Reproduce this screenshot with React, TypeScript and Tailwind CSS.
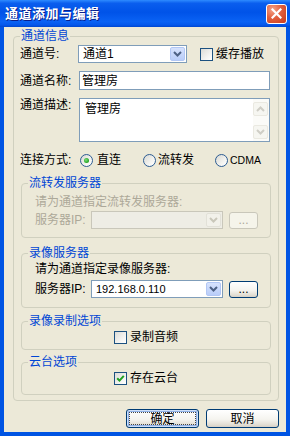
import React from "react";

function Chevron({ color, up = false }: { color: string; up?: boolean }) {
  return (
    <svg width="9" height="6" viewBox="0 0 9 6">
      <path
        d={up ? "M1 5 L4.5 1.5 L8 5" : "M1 1 L4.5 4.5 L8 1"}
        stroke={color}
        strokeWidth="2"
        fill="none"
      />
    </svg>
  );
}

function Combo({
  value,
  widthClass,
  disabled = false,
  textClass = "",
}: {
  value?: string;
  widthClass: string;
  disabled?: boolean;
  textClass?: string;
}) {
  return (
    <div
      className={`${widthClass} h-[18px] flex items-stretch border ${
        disabled ? "border-[#C9C7BA] bg-[#EEEDE5]" : "border-[#7F9DB9] bg-white"
      }`}
    >
      <div className={`flex-1 flex items-center pl-[4px] ${textClass}`}>{value}</div>
      {disabled ? (
        <div className="w-[15px] m-[1px] rounded-[2px] border border-[#E2E1D8] bg-[#F2F1EA] flex items-center justify-center">
          <Chevron color="#C9C7BA" />
        </div>
      ) : (
        <div className="w-[15px] m-[1px] rounded-[2px] border border-[#B2C7F5] bg-[linear-gradient(180deg,#D6E2FD_0%,#B9CDF9_100%)] flex items-center justify-center">
          <Chevron color="#4D6185" />
        </div>
      )}
    </div>
  );
}

function Checkbox({ checked = false }: { checked?: boolean }) {
  return (
    <div className="w-[13px] h-[13px] shrink-0 border border-[#1C5180] bg-[linear-gradient(135deg,#DCDCD7_0%,#F6F6F4_70%,#FFFFFF_100%)] flex items-center justify-center">
      {checked && (
        <svg width="9" height="9" viewBox="0 0 9 9">
          <path d="M1.2 4.2 L3.5 6.6 L7.8 1.8" stroke="#21A121" strokeWidth="2" fill="none" />
        </svg>
      )}
    </div>
  );
}

function Radio({ checked = false }: { checked?: boolean }) {
  return (
    <div className="w-[13px] h-[13px] shrink-0 rounded-full border border-[#2C5C92] bg-[linear-gradient(135deg,#D8D8D2_0%,#F5F5F2_65%,#FFFFFF_100%)] flex items-center justify-center">
      {checked && (
        <div className="w-[5px] h-[5px] rounded-full bg-[radial-gradient(circle_at_40%_40%,#7BE07B_0%,#21A121_70%,#1A8A1A_100%)]" />
      )}
    </div>
  );
}

function XPButton({
  children,
  isDefault = false,
  widthClass,
  disabled = false,
}: {
  children: React.ReactNode;
  isDefault?: boolean;
  widthClass: string;
  disabled?: boolean;
}) {
  if (disabled) {
    return (
      <div
        className={`${widthClass} h-[17px] rounded-[3px] border border-[#C9C7BA] bg-[#F5F4EA] text-[#ACA899] flex items-center justify-center`}
      >
        {children}
      </div>
    );
  }
  return (
    <div
      className={`${widthClass} ${
        isDefault ? "h-[19px]" : "h-[19px]"
      } rounded-[3px] border border-[#003C74] bg-[linear-gradient(180deg,#FFFFFF_0%,#F5F4EF_55%,#E3DFD5_85%,#D6D0C5_100%)] flex ${
        isDefault ? "p-[2px] shadow-[inset_0_0_0_1px_#CEDFF8,inset_0_0_0_2px_#8FB1E8]" : ""
      }`}
    >
      <div
        className={`flex-1 flex items-center justify-center ${
          isDefault ? "border border-dotted border-[#444]" : ""
        }`}
      >
        {children}
      </div>
    </div>
  );
}

export default function App() {
  return (
    <div className="w-[290px] h-[436px] flex flex-col bg-[#0054E3] font-['Liberation_Sans','Noto_Sans_CJK_SC',sans-serif] text-[12px] leading-[14px] text-black overflow-hidden">
      {/* Title bar */}
      <div className="h-[27px] shrink-0 flex items-center justify-between pl-[5px] pr-[3px] bg-[linear-gradient(180deg,#2E8BFF_0%,#0A5EEE_12%,#0053E8_45%,#0A62F4_80%,#0558EC_92%,#0046CF_100%)]">
        <span className="text-white font-bold text-[13px] tracking-[0.5px] [text-shadow:1px_1px_0_#0A1E8A]">
          通道添加与编辑
        </span>
        <div className="w-[21px] h-[20px] rounded-[3px] border border-white bg-[radial-gradient(circle_at_30%_25%,#F4A48A_0%,#E2603E_45%,#C7391A_100%)] flex items-center justify-center">
          <svg width="11" height="11" viewBox="0 0 11 11">
            <path d="M1.5 1.5 L9.5 9.5 M9.5 1.5 L1.5 9.5" stroke="white" strokeWidth="2.2" strokeLinecap="square" />
          </svg>
        </div>
      </div>

      {/* Body */}
      <div className="flex-1 mx-[4px] mb-[4px] bg-[#ECE9D8] flex flex-col">
        <fieldset className="mt-[2px] ml-[9px] mr-[7px] border border-[#D0D0BF] rounded-[4px] pl-[6px] pr-[7px] pb-[5px]">
          <legend className="px-[1px] text-[#0046D5] leading-[14px]">通道信息</legend>

          {/* Row 1 */}
          <div className="mt-[2px] h-[18px] flex items-center">
            <div className="w-[58px]">通道号:</div>
            <Combo value="通道1" widthClass="w-[109px]" />
            <div className="ml-[13px]">
              <Checkbox />
            </div>
            <div className="ml-[3px]">缓存播放</div>
          </div>

          {/* Row 2 */}
          <div className="mt-[8px] h-[19px] flex items-center">
            <div className="w-[59px]">通道名称:</div>
            <div className="w-[191px] h-[19px] border border-[#7F9DB9] bg-white flex items-center pl-[2px]">
              管理房
            </div>
          </div>

          {/* Row 3 */}
          <div className="mt-[8px] h-[44px] flex items-start">
            <div className="w-[59px] pt-[0px]">通道描述:</div>
            <div className="w-[191px] h-[44px] border border-[#7F9DB9] bg-white flex">
              <div className="flex-1 pl-[5px] pt-[3px]">管理房</div>
              <div className="w-[16px] flex flex-col bg-[#FBFBF8] py-[1px] pr-[1px]">
                <div className="h-[14px] mt-[2px] rounded-[2px] border border-[#EAE9E1] bg-[#F6F6F1] flex items-center justify-center">
                  <Chevron color="#CFCEC6" up />
                </div>
                <div className="flex-1" />
                <div className="h-[14px] mb-[1px] rounded-[2px] border border-[#EAE9E1] bg-[#F6F6F1] flex items-center justify-center">
                  <Chevron color="#CFCEC6" />
                </div>
              </div>
            </div>
          </div>

          {/* Radio row */}
          <div className="mt-[10px] h-[16px] flex items-center">
            <div className="w-[60px]">连接方式:</div>
            <div className="w-[63px] flex items-center gap-[4px]">
              <Radio checked />
              <span>直连</span>
            </div>
            <div className="w-[72px] flex items-center gap-[2px]">
              <Radio />
              <span>流转发</span>
            </div>
            <div className="flex items-center gap-[2px]">
              <Radio />
              <span className="text-[10.5px]">CDMA</span>
            </div>
          </div>

          {/* 流转发服务器 */}
          <fieldset className="mt-[8px] ml-[1px] border border-[#D0D0BF] rounded-[4px] pl-[6px] pb-[8px]">
            <legend className="px-[1px] text-[#0046D5] leading-[14px]">流转发服务器</legend>
            <div className="pl-[7px] text-[#ACA899]">
              <div className="mt-[5px] h-[14px]">请为通道指定流转发服务器:</div>
              <div className="mt-[2px] h-[18px] flex items-center">
                <div className="w-[56px]">服务器IP:</div>
                <Combo widthClass="w-[132px]" disabled />
                <div className="ml-[6px]">
                  <XPButton widthClass="w-[29px]" disabled>
                    ...
                  </XPButton>
                </div>
              </div>
            </div>
          </fieldset>

          {/* 录像服务器 */}
          <fieldset className="mt-[8px] ml-[1px] border border-[#D0D0BF] rounded-[4px] pl-[6px] pb-[9px]">
            <legend className="px-[1px] text-[#0046D5] leading-[14px]">录像服务器</legend>
            <div className="pl-[7px]">
              <div className="mt-[2px] h-[14px]">请为通道指定录像服务器:</div>
              <div className="mt-[4px] h-[18px] flex items-center">
                <div className="w-[56px]">服务器IP:</div>
                <Combo value="192.168.0.110" widthClass="w-[132px]" textClass="text-[11px]" />
                <div className="ml-[6px]">
                  <div className="w-[29px] h-[17px] rounded-[3px] border border-[#003C74] bg-[linear-gradient(180deg,#FFFFFF_0%,#F5F4EF_55%,#E3DFD5_85%,#D6D0C5_100%)] flex items-center justify-center">
                    ...
                  </div>
                </div>
              </div>
            </div>
          </fieldset>

          {/* 录像录制选项 */}
          <fieldset className="mt-[6px] ml-[1px] border border-[#D0D0BF] rounded-[4px] pl-[6px] pb-[4px]">
            <legend className="px-[1px] text-[#0046D5] leading-[14px]">录像录制选项</legend>
            <div className="mt-[1px] h-[16px] flex items-center justify-center gap-[3px] pr-[6px]">
              <Checkbox />
              <span>录制音频</span>
            </div>
          </fieldset>

          {/* 云台选项 */}
          <fieldset className="mt-[5px] ml-[1px] border border-[#D0D0BF] rounded-[4px] pl-[6px] pb-[8px]">
            <legend className="px-[1px] text-[#0046D5] leading-[14px]">云台选项</legend>
            <div className="mt-[1px] h-[16px] flex items-center justify-center gap-[3px] pr-[6px]">
              <Checkbox checked />
              <span>存在云台</span>
            </div>
          </fieldset>
        </fieldset>

        {/* Buttons */}
        <div className="mt-[8px] mr-[7px] flex justify-end gap-[7px]">
          <XPButton widthClass="w-[73px]" isDefault>
            确定
          </XPButton>
          <XPButton widthClass="w-[73px]">取消</XPButton>
        </div>
      </div>
    </div>
  );
}
